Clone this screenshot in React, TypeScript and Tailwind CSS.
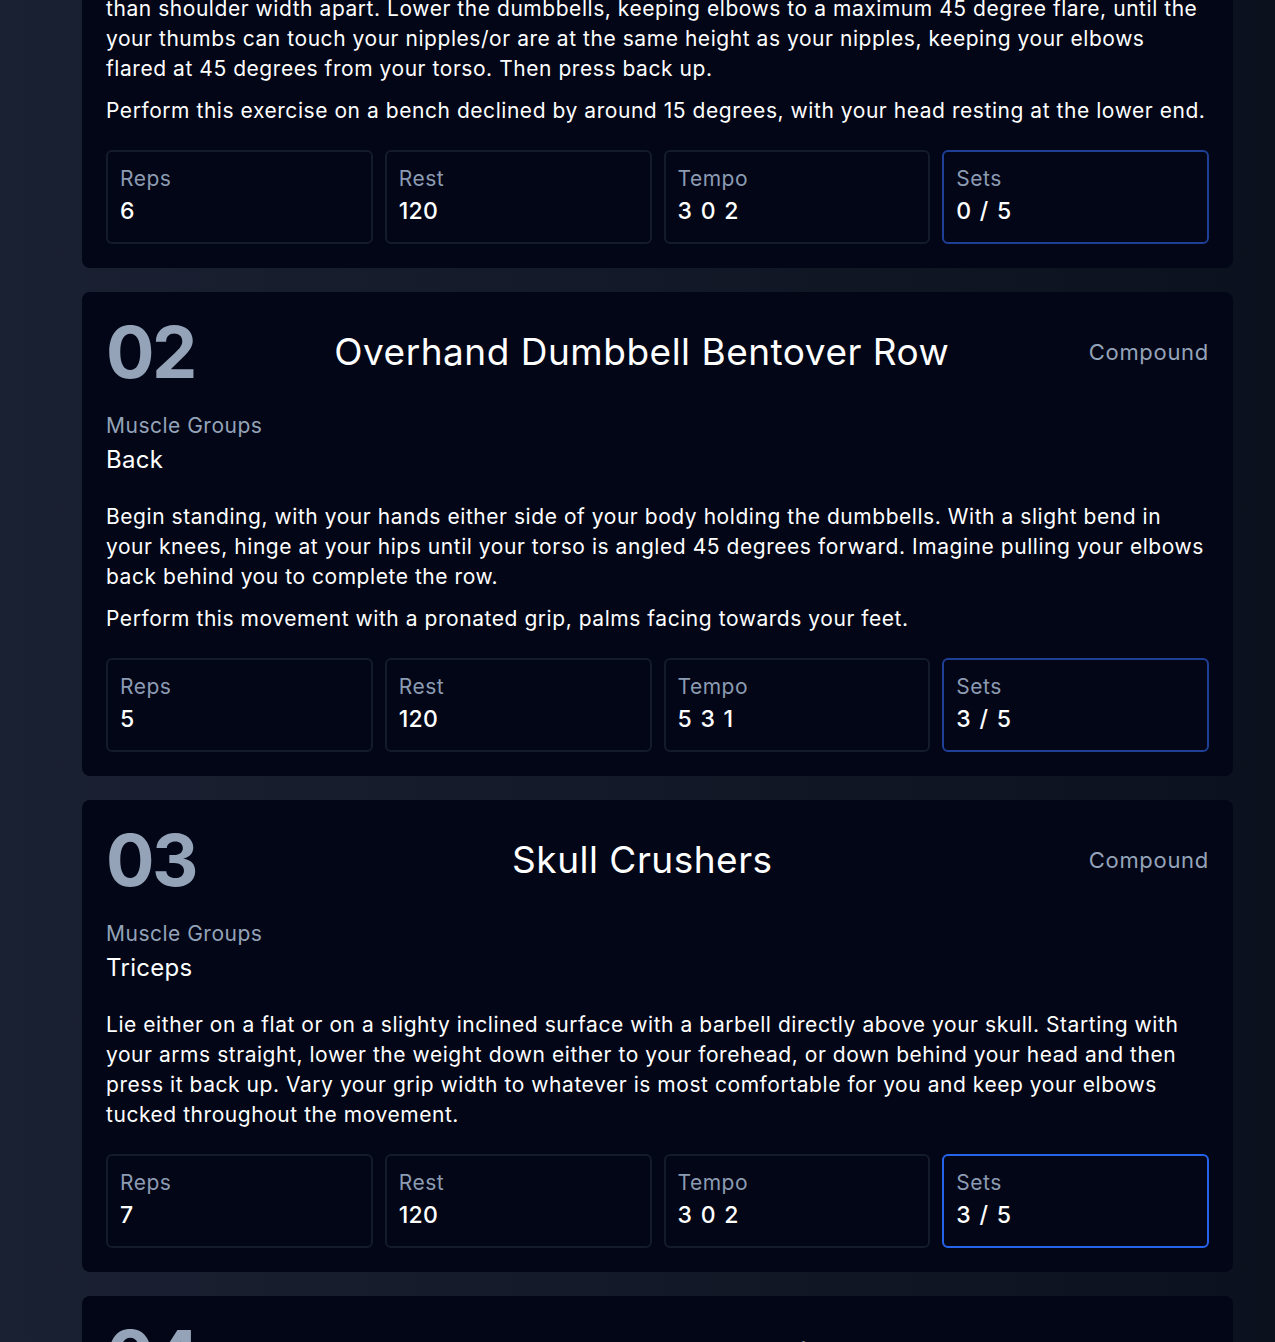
type Exercise = {
  num: string;
  title: string;
  kind: string;
  muscles: string;
  description: string[];
  reps: string;
  rest: string;
  tempo: string;
  setsDone: number;
  setsTotal: number;
  active?: boolean;
};

const exercises: Exercise[] = [
  {
    num: '01',
    title: 'Decline Dumbbell Bench Press',
    kind: 'Compound',
    muscles: 'Chest',
    description: [
      'Lie back on the bench holding a dumbbell in each hand above your chest, with your hands slightly wider than shoulder width apart. Lower the dumbbells, keeping elbows to a maximum 45 degree flare, until the your thumbs can touch your nipples/or are at the same height as your nipples, keeping your elbows flared at 45 degrees from your torso. Then press back up.',
      'Perform this exercise on a bench declined by around 15 degrees, with your head resting at the lower end.',
    ],
    reps: '6',
    rest: '120',
    tempo: '3 0 2',
    setsDone: 0,
    setsTotal: 5,
  },
  {
    num: '02',
    title: 'Overhand Dumbbell Bentover Row',
    kind: 'Compound',
    muscles: 'Back',
    description: [
      'Begin standing, with your hands either side of your body holding the dumbbells. With a slight bend in your knees, hinge at your hips until your torso is angled 45 degrees forward. Imagine pulling your elbows back behind you to complete the row.',
      'Perform this movement with a pronated grip, palms facing towards your feet.',
    ],
    reps: '5',
    rest: '120',
    tempo: '5 3 1',
    setsDone: 3,
    setsTotal: 5,
  },
  {
    num: '03',
    title: 'Skull Crushers',
    kind: 'Compound',
    muscles: 'Triceps',
    description: [
      'Lie either on a flat or on a slighty inclined surface with a barbell directly above your skull. Starting with your arms straight, lower the weight down either to your forehead, or down behind your head and then press it back up. Vary your grip width to whatever is most comfortable for you and keep your elbows tucked throughout the movement.',
    ],
    reps: '7',
    rest: '120',
    tempo: '3 0 2',
    setsDone: 3,
    setsTotal: 5,
    active: true,
  },
  {
    num: '04',
    title: 'Dumbbell Lateral Raise',
    kind: 'Accessory',
    muscles: 'Shoulders',
    description: ['Stand tall with a dumbbell in each hand and raise your arms out to the side.'],
    reps: '10',
    rest: '90',
    tempo: '2 0 2',
    setsDone: 0,
    setsTotal: 4,
  },
];

function Stat({ label, value, blue, active }: { label: string; value: string; blue?: boolean; active?: boolean }) {
  const border = blue ? (active ? 'border-[#2563eb]' : 'border-[#1e3f96]') : 'border-[#141c2c]';
  return (
    <div className={`border-2 ${border} rounded-md px-3 pt-[13px] pb-[13px]`}>
      <p className="text-[21px] leading-7 tracking-[0.5px] text-[#8c9bb2]">{label}</p>
      <p className="text-[23px] leading-9 font-medium tracking-[0.3px] text-white [word-spacing:2px]">{value}</p>
    </div>
  );
}

function ExerciseCard({ ex }: { ex: Exercise }) {
  return (
    <div className="bg-[#020617] rounded-lg p-6">
      <div className="flex items-center justify-between">
        <span className="text-7xl leading-none font-bold tracking-[-2.5px] text-[#94a3b8]">{ex.num}</span>
        <h2 className="text-[37px] tracking-[0.5px] text-white">{ex.title}</h2>
        <span className="text-[22px] tracking-[0.7px] text-[#94a3b8]">{ex.kind}</span>
      </div>
      <div className="mt-6">
        <p className="text-[21px] leading-7 tracking-[0.5px] text-[#94a3b8]">Muscle Groups</p>
        <p className="text-2xl leading-10 tracking-[0.3px] text-white">{ex.muscles}</p>
      </div>
      <div className="mt-[22px] flex flex-col gap-3 text-[21px] leading-[30px] tracking-[0.55px] text-white">
        {ex.description.map((d, i) => (
          <p key={i}>{d}</p>
        ))}
      </div>
      <div className="mt-6 grid grid-cols-4 gap-3">
        <Stat label="Reps" value={ex.reps} />
        <Stat label="Rest" value={ex.rest} />
        <Stat label="Tempo" value={ex.tempo} />
        <Stat label="Sets" value={`${ex.setsDone} / ${ex.setsTotal}`} blue active={ex.active} />
      </div>
    </div>
  );
}

export default function App() {
  return (
    <div className="h-[1342px] overflow-hidden bg-linear-to-r from-[#1a2132] to-[#0c111e] font-['Inter',sans-serif]">
      <div className="pl-[82px] pr-[42px] -mt-[246px] flex flex-col gap-6">
        {exercises.map((ex) => (
          <ExerciseCard key={ex.num} ex={ex} />
        ))}
      </div>
    </div>
  );
}
